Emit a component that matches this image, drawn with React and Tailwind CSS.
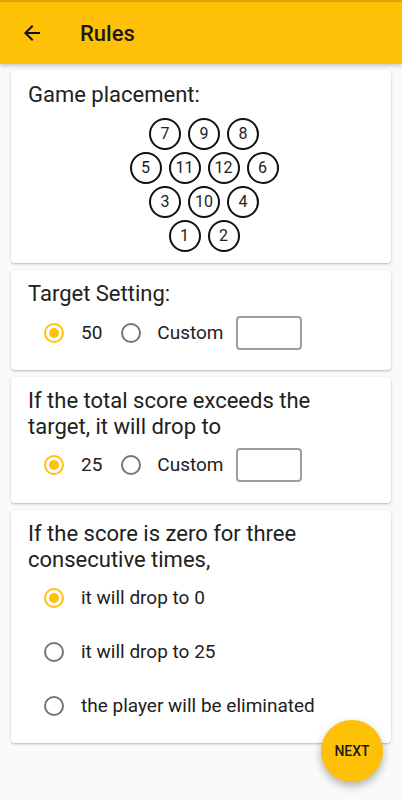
const rows = [
  [7, 9, 8],
  [5, 11, 12, 6],
  [3, 10, 4],
  [1, 2],
];

const Radio = ({ checked }) => (
  <span
    className={`flex items-center justify-center w-[20px] h-[20px] rounded-full border-2 shrink-0 ${
      checked ? 'border-[#FFC107]' : 'border-[#757575]'
    }`}
  >
    {checked && <span className="w-[10px] h-[10px] rounded-full bg-[#FFC107]" />}
  </span>
);

const Card = ({ children, className = '' }) => (
  <div className={`mx-[11px] bg-white rounded-[4px] shadow-[0_1px_3px_rgba(0,0,0,0.2),0_1px_1px_rgba(0,0,0,0.08)] ${className}`}>
    {children}
  </div>
);

const ValueRow = ({ value }) => (
  <div className="flex items-center h-[48px] pl-[33px] text-[19px] text-[#212121]">
    <Radio checked />
    <span className="ml-[17px]">{value}</span>
    <span className="ml-[19px]"><Radio /></span>
    <span className="ml-[16px]">Custom</span>
    <div className="ml-[12px] w-[66px] h-[34px] rounded-[4px] border-2 border-[#9e9e9e]" />
  </div>
);

export default function App() {
  return (
    <div
      className="relative min-h-[800px] bg-[#fafafa] text-[#212121]"
      style={{ fontFamily: 'Roboto, "Noto Sans", sans-serif' }}
    >
      {/* App bar */}
      <header className="h-16 flex items-center bg-[#FFC107] border-t-2 border-[#dba400] shadow-[0_2px_4px_rgba(0,0,0,0.2)]">
        <svg width="24" height="24" viewBox="0 0 24 24" className="ml-[20px]">
          <path d="M20 11H7.83l5.59-5.59L12 4l-8 8 8 8 1.41-1.41L7.83 13H20v-2z" fill="#111" />
        </svg>
        <h1 className="ml-[36px] text-[22px] font-medium text-[#1a1a1a]">Rules</h1>
      </header>

      <div className="pt-[6px] flex flex-col gap-[7px]">
        {/* Game placement */}
        <Card className="pt-[12px] pb-[11px]">
          <p className="px-[17px] text-[22px] leading-[26px]">Game placement:</p>
          <div className="mt-[10px] pl-[6px] flex flex-col items-center gap-[2px]">
            {rows.map((row, i) => (
              <div key={i} className="flex gap-[7px]">
                {row.map((n) => (
                  <div
                    key={n}
                    className="w-[32px] h-[32px] rounded-full border-2 border-[#111] flex items-center justify-center text-[16px] text-[#222]"
                  >
                    {n}
                  </div>
                ))}
              </div>
            ))}
          </div>
        </Card>

        {/* Target */}
        <Card className="pt-[11px] pb-[13px]">
          <p className="px-[17px] text-[22px] leading-[26px]">Target Setting:</p>
          <div className="mt-[2px]">
            <ValueRow value="50" />
          </div>
        </Card>

        {/* Exceeds */}
        <Card className="pt-[11px] pb-[14px]">
          <p className="px-[17px] text-[22px] leading-[26px]">
            If the total score exceeds the target, it will drop to
          </p>
          <div className="mt-[1px]">
            <ValueRow value="25" />
          </div>
        </Card>

        {/* Zero three times */}
        <Card className="pt-[11px] pb-[10px]">
          <p className="px-[17px] text-[22px] leading-[26px]">
            If the score is zero for three consecutive times,
          </p>
          <div className="-mt-[2px] flex flex-col">
            {['it will drop to 0', 'it will drop to 25', 'the player will be eliminated'].map((label, i) => (
              <div key={label} className="flex items-center h-[54px] pl-[33px] text-[19px]">
                <Radio checked={i === 0} />
                <span className="ml-[17px]">{label}</span>
              </div>
            ))}
          </div>
        </Card>
      </div>

      {/* FAB */}
      <button className="absolute right-[19px] top-[720px] w-[62px] h-[62px] rounded-full bg-[#FFC107] shadow-[0_4px_8px_rgba(0,0,0,0.3)] flex items-center justify-center text-[14px] font-medium text-[#1a1a1a]">
        NEXT
      </button>
    </div>
  );
}
